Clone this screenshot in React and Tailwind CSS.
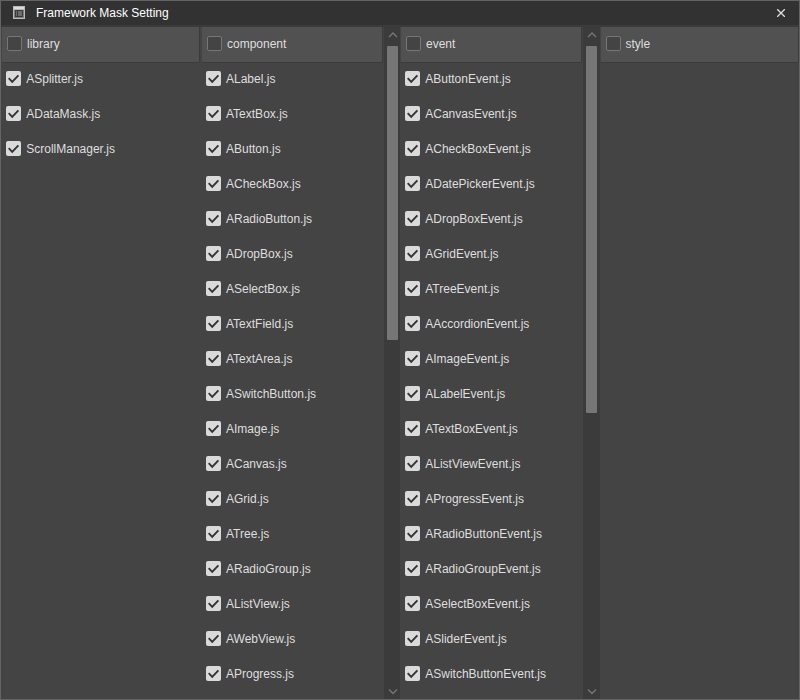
const columns = [
  {
    name: 'library',
    frame: 'w-[199px] pl-px',
    header: 'w-[197px] gap-[5px]',
    rowGap: 'gap-[5.25px]',
    files: ['ASplitter', 'ADataMask', 'ScrollManager'],
  },
  {
    name: 'component',
    frame: 'w-[200px] pl-[2px]',
    header: 'w-[180px] gap-[5px]',
    scroll: { margin: 'ml-[2px] w-4', thumb: 'h-[294px]' },
    files: ['ALabel', 'ATextBox', 'AButton', 'ACheckBox', 'ARadioButton', 'ADropBox', 'ASelectBox', 'ATextField', 'ATextArea', 'ASwitchButton', 'AImage', 'ACanvas', 'AGrid', 'ATree', 'ARadioGroup', 'AListView', 'AWebView', 'AProgress'],
  },
  {
    name: 'event',
    frame: 'w-[200px] pl-px',
    header: 'w-[180px] gap-[5px]',
    rowGap: 'gap-[5.25px]',
    scroll: { margin: 'ml-[2px] w-[17px]', thumb: 'h-[367px]' },
    files: ['AButtonEvent', 'ACanvasEvent', 'ACheckBoxEvent', 'ADatePickerEvent', 'ADropBoxEvent', 'AGridEvent', 'ATreeEvent', 'AAccordionEvent', 'AImageEvent', 'ALabelEvent', 'ATextBoxEvent', 'AListViewEvent', 'AProgressEvent', 'ARadioButtonEvent', 'ARadioGroupEvent', 'ASelectBoxEvent', 'ASliderEvent', 'ASwitchButtonEvent'],
  },
  {
    name: 'style',
    frame: 'w-[198px] pl-px',
    header: 'w-[197px] gap-[4.4px]',
    files: [],
  },
];

function Checkbox({ checked }) {
  if (!checked) {
    return <span className="size-[15px] shrink-0 rounded-[2px] border border-[#767676] bg-[#444444]" />;
  }
  return (
    <span className="size-[15px] shrink-0 rounded-[2px] bg-[#dadada]">
      <svg width="15" height="15" viewBox="0 0 15 15" fill="none" stroke="#333" strokeWidth="1.9">
        <path d="M2.7 7.2 6.2 10.8 12.4 4.3" />
      </svg>
    </span>
  );
}

function Chevron({ down }) {
  return (
    <svg className="shrink-0" width="11" height="19" viewBox="0 0 11 19" fill="none" stroke="#767676" strokeWidth="1.4">
      <path d={down ? 'M2 9.5 6 13.5 10 9.5' : 'M2 10 6 6 10 10'} />
    </svg>
  );
}

function ScrollBar({ margin, thumb }) {
  return (
    <div className={`flex shrink-0 flex-col justify-between bg-[#3b3b3b] pl-[3px] ${margin}`}>
      <div className="flex flex-col">
        <Chevron />
        <div className={`w-[11px] rounded-[1px] bg-[#767676] ${thumb}`} />
      </div>
      <Chevron down />
    </div>
  );
}

function Column({ name, frame, header, rowGap = 'gap-[5px]', files, scroll }) {
  return (
    <section className={`flex shrink-0 ${frame}`}>
      <div className="flex shrink-0 flex-col">
        <div className={`flex h-[35px] items-center bg-[#515151] pb-[2px] pl-[5px] shadow-[0_1px_0_#3b3b3b,1px_0_0_#3b3b3b] ${header}`}>
          <Checkbox />
          <span className="pt-[2px]">{name}</span>
        </div>
        <ul className="-mt-px pl-1">
          {files.map((file) => (
            <li key={file} className={`flex h-[35px] items-center ${rowGap}`}>
              <Checkbox checked />
              <span className="pt-[2px]">{file}.js</span>
            </li>
          ))}
        </ul>
      </div>
      {scroll && <ScrollBar {...scroll} />}
    </section>
  );
}

export default function App() {
  return (
    <main className="flex h-[700px] w-[800px] flex-col overflow-hidden border border-[#646464] bg-[#444444] font-['Liberation_Sans',Arial,sans-serif] text-[12px] leading-[15px] text-[#dfdfdf]">
      <header className="flex h-[24px] shrink-0 items-center bg-[#323232] pl-3 text-white">
        <svg className="-mt-px" width="12" height="13" viewBox="0 0 12 13" shapeRendering="crispEdges">
          <path fill="#b9b9b9" d="M0 0h12v13H0z" />
          <path fill="#dadada" d="M1 1h10v2H1z" />
          <path fill="#808080" d="M1 4h10v8H1z" />
          <path fill="#3a3a3a" d="M2 4h8v7H2z" />
          <path fill="#6c6c6c" d="M3 5h1v5H3zM5 5h4v5H5z" />
        </svg>
        <h1 className="ml-[11px]">Framework Mask Setting</h1>
        <svg className="ml-auto mr-[14px]" width="8" height="8" viewBox="0 0 8 8" stroke="#dedede" strokeWidth="1.3">
          <path d="M0 0 8 8M8 0 0 8" />
        </svg>
      </header>
      <div className="h-[2px] shrink-0 bg-[#3b3b3b]" />
      <div className="flex min-h-0 flex-1">
        {columns.map((column) => (
          <Column key={column.name} {...column} />
        ))}
      </div>
    </main>
  );
}
